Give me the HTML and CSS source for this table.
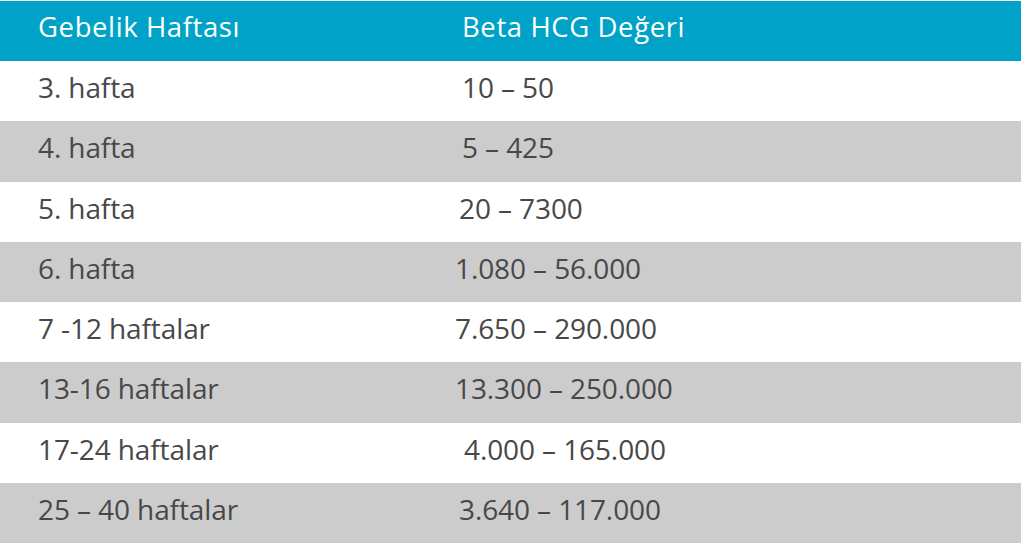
FILE: index.html
```html
<!DOCTYPE html>
<html lang="tr">
<head>
<meta charset="utf-8">
<title>Beta HCG Değerleri</title>
<link rel="stylesheet" href="styles.css">
</head>
<body>
<table class="hcg">
  <thead>
    <tr><th class="c1">Gebelik Haftası</th><th class="c2">Beta HCG Değeri</th></tr>
  </thead>
  <tbody>
    <tr><td class="c1">3. hafta</td><td class="c2">10 – 50</td></tr>
    <tr><td class="c1">4. hafta</td><td class="c2">5 – 425</td></tr>
    <tr><td class="c1">5. hafta</td><td class="c2 shift-m">20 – 7300</td></tr>
    <tr><td class="c1">6. hafta</td><td class="c2 shift-l">1.080 – 56.000</td></tr>
    <tr><td class="c1">7 -12 haftalar</td><td class="c2 shift-l">7.650 – 290.000</td></tr>
    <tr><td class="c1">13-16 haftalar</td><td class="c2 shift-l">13.300 – 250.000</td></tr>
    <tr><td class="c1">17-24 haftalar</td><td class="c2 shift-r">4.000 – 165.000</td></tr>
    <tr><td class="c1">25 – 40 haftalar</td><td class="c2 shift-m">3.640 – 117.000</td></tr>
  </tbody>
</table>
</body>
</html>
```
FILE: styles.css
```css
html, body {
  margin: 0;
  padding: 0;
  background: #ffffff;
}
body {
  padding-top: 1px;
  font-family: "Open Sans", "Noto Sans", sans-serif;
}
.hcg {
  width: 1021px;
  border-collapse: collapse;
  border-spacing: 0;
  table-layout: fixed;
}
.hcg th, .hcg td {
  padding: 0;
  text-align: left;
  vertical-align: middle;
  line-height: 1;
  box-sizing: border-box;
}
.hcg thead tr {
  background: #00a3c7;
}
.hcg th {
  color: #ffffff;
  font-weight: 400;
  font-size: 27.5px;
  letter-spacing: 0.6px;
  height: 60px;
  padding-bottom: 9px;
}
.hcg td {
  color: #484848;
  font-weight: 400;
  font-size: 28px;
  letter-spacing: -0.1px;
  height: 60.25px;
  padding-bottom: 8px;
}
.hcg tbody tr:nth-child(even) {
  background: #cccccc;
}
.hcg .c1 {
  width: 458px;
  padding-left: 38px;
}
.hcg .c2 {
  padding-left: 4px;
}
.hcg .shift-m {
  padding-left: 1px;
}
.hcg .shift-l {
  padding-left: 0;
  text-indent: -3px;
}
.hcg .shift-r {
  padding-left: 6px;
}
```
